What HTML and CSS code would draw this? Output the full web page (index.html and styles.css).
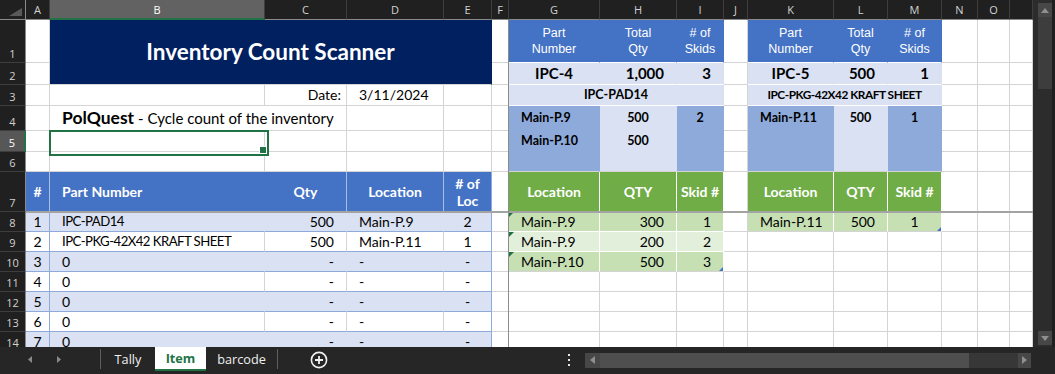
FILE: index.html
```html
<!DOCTYPE html>
<html>
<head>
<meta charset="utf-8">
<title>Inventory Count Scanner</title>
<link rel="stylesheet" href="styles.css">
</head>
<body>
<div class="app">
  <div class="sheetwrap">
    <div class="sheet">
      <!-- column headers -->
      <div class="corner"></div>
      <div class="ch">A</div><div class="ch on">B</div><div class="ch">C</div><div class="ch">D</div><div class="ch">E</div><div class="ch">F</div><div class="ch">G</div><div class="ch">H</div><div class="ch">I</div><div class="ch">J</div><div class="ch">K</div><div class="ch">L</div><div class="ch">M</div><div class="ch">N</div><div class="ch">O</div><div class="ch"></div>

      <!-- row 1 -->
      <div class="rh">1</div><div></div>
      <div class="nv">Inventory Count Scanner</div>
      <div></div>
      <div class="bh">Part<br>Number</div><div class="bh">Total<br>Qty</div><div class="bh">#&nbsp;of<br>Skids</div>
      <div></div>
      <div class="bh">Part<br>Number</div><div class="bh">Total<br>Qty</div><div class="bh">#&nbsp;of<br>Skids</div>
      <div></div><div></div><div></div>

      <!-- row 2 -->
      <div class="rh">2</div><div></div>
      <div></div>
      <div class="lb big c">IPC-4</div><div class="lb big r">1,000</div><div class="lb big r">3</div>
      <div></div>
      <div class="lb big c">IPC-5</div><div class="lb big r">500</div><div class="lb big r">1</div>
      <div></div><div></div><div></div>

      <!-- row 3 -->
      <div class="rh">3</div><div></div><div></div>
      <div class="dt">Date:</div><div class="ind">3/11/2024</div><div></div><div></div>
      <div class="lb sm c s3">IPC-PAD14</div>
      <div></div>
      <div class="lb sm c s3 capb">IPC-PKG-42X42 KRAFT SHEET</div>
      <div></div><div></div><div></div>

      <!-- row 4 -->
      <div class="rh">4</div><div></div>
      <div class="s2 ind pq"><span><b>PolQuest</b> - Cycle count of the inventory</span></div>
      <div></div><div></div><div></div>
      <div class="mb sm ind">Main-P.9</div><div class="lbm sm c">500</div><div class="mb sm c">2</div>
      <div></div>
      <div class="mb sm ind">Main-P.11</div><div class="lbm sm c">500</div><div class="mb sm c">1</div>
      <div></div><div></div><div></div>

      <!-- row 5 -->
      <div class="rh on">5</div><div></div>
      <div class="sel"></div>
      <div></div><div></div><div></div><div></div>
      <div class="mb sm ind">Main-P.10</div><div class="lbm sm c">500</div><div class="mb"></div>
      <div></div>
      <div class="mb"></div><div class="lbm"></div><div class="mb"></div>
      <div></div><div></div><div></div>

      <!-- row 6 -->
      <div class="rh">6</div><div></div><div></div><div></div><div></div><div></div><div></div>
      <div class="mb gb"></div><div class="lbm gb"></div><div class="mb gb"></div>
      <div></div>
      <div class="mb gb"></div><div class="lbm gb"></div><div class="mb gb"></div>
      <div></div><div></div><div></div>

      <!-- row 7 -->
      <div class="rh">7</div>
      <div class="lh c">#</div><div class="lh ind nr">Part Number</div><div class="lh c">Qty</div><div class="lh c">Location</div><div class="lh c two">#&nbsp;of<br>Loc</div>
      <div></div>
      <div class="gh">Location</div><div class="gh">QTY</div><div class="gh">Skid #</div>
      <div></div>
      <div class="gh">Location</div><div class="gh">QTY</div><div class="gh">Skid #</div>
      <div></div><div></div><div></div>

      <!-- row 8 -->
      <div class="rh">8</div>
      <div class="t band ta c">1</div><div class="t band ind cap">IPC-PAD14</div><div class="t band r">500</div><div class="t band ind">Main-P.9</div><div class="t band te c">2</div>
      <div></div>
      <div class="g1 ind tri">Main-P.9</div><div class="g1 r">300</div><div class="g1 r">1</div>
      <div></div>
      <div class="g1 ind last">Main-P.11</div><div class="g1 r last">500</div><div class="g1 c last hnd">1</div>
      <div></div><div></div><div></div>

      <!-- row 9 -->
      <div class="rh">9</div>
      <div class="t ta c">2</div><div class="t ind cap">IPC-PKG-42X42 KRAFT SHEET</div><div class="t r">500</div><div class="t ind">Main-P.11</div><div class="t te c">1</div>
      <div></div>
      <div class="g2 ind tri">Main-P.9</div><div class="g2 r">200</div><div class="g2 r">2</div>
      <div></div><div></div><div></div><div></div><div></div><div></div><div></div>

      <!-- row 10 -->
      <div class="rh">10</div>
      <div class="t band ta c">3</div><div class="t band ind">0</div><div class="t band r">-</div><div class="t band ind">-</div><div class="t band te c">-</div>
      <div></div>
      <div class="g1 ind tri last">Main-P.10</div><div class="g1 r last">500</div><div class="g1 r last hnd">3</div>
      <div></div><div></div><div></div><div></div><div></div><div></div><div></div>

      <!-- row 11 -->
      <div class="rh">11</div>
      <div class="t ta c">4</div><div class="t ind">0</div><div class="t r">-</div><div class="t ind">-</div><div class="t te c">-</div>
      <div></div><div></div><div></div><div></div><div></div><div></div><div></div><div></div><div></div><div></div><div></div>

      <!-- row 12 -->
      <div class="rh">12</div>
      <div class="t band ta c">5</div><div class="t band ind">0</div><div class="t band r">-</div><div class="t band ind">-</div><div class="t band te c">-</div>
      <div></div><div></div><div></div><div></div><div></div><div></div><div></div><div></div><div></div><div></div><div></div>

      <!-- row 13 -->
      <div class="rh">13</div>
      <div class="t ta c">6</div><div class="t ind">0</div><div class="t r">-</div><div class="t ind">-</div><div class="t te c">-</div>
      <div></div><div></div><div></div><div></div><div></div><div></div><div></div><div></div><div></div><div></div><div></div>

      <!-- row 14 -->
      <div class="rh">14</div>
      <div class="t band ta c">7</div><div class="t band ind">0</div><div class="t band r">-</div><div class="t band ind">-</div><div class="t band te c">-</div>
      <div></div><div></div><div></div><div></div><div></div><div></div><div></div><div></div><div></div><div></div><div></div>
    </div>
    <div class="fz-h"></div>
    <div class="fz-v"></div>
  </div>

  <div class="vscroll">
    <div class="vbtn"><svg width="8" height="5" viewBox="0 0 8 5"><polygon points="0,5 4,0 8,5" fill="#8f8f8f"/></svg></div>
    <div class="vthumb"></div>
    <div class="vtrack"></div>
    <div class="vbtn"><svg width="8" height="5" viewBox="0 0 8 5"><polygon points="0,0 8,0 4,5" fill="#8f8f8f"/></svg></div>
  </div>

  <div class="tabbar">
    <svg class="navs" width="100" height="27" viewBox="0 0 100 27">
      <polygon points="32,9 28,12.5 32,16" fill="#8a8a8a"/>
      <polygon points="57,9 61,12.5 57,16" fill="#8a8a8a"/>
    </svg>
    <div class="tsep"></div>
    <div class="tab w1">Tally</div>
    <div class="tab w2 act">Item</div>
    <div class="tab w3">barcode</div>
    <div class="tsep"></div>
    <svg class="plus" width="18" height="18" viewBox="0 0 18 18">
      <circle cx="9" cy="9" r="7.6" fill="none" stroke="#f2f2f2" stroke-width="1.6"/>
      <path d="M9 5v8M5 9h8" stroke="#f2f2f2" stroke-width="1.8"/>
    </svg>
    <div class="right">
      <svg class="dots" width="4" height="12" viewBox="0 0 4 12">
        <rect x="1" y="0" width="2" height="2" fill="#e6e6e6"/>
        <rect x="1" y="5" width="2" height="2" fill="#e6e6e6"/>
        <rect x="1" y="10" width="2" height="2" fill="#e6e6e6"/>
      </svg>
      <div class="hscroll">
        <div class="hbtn l"><svg width="5" height="8" viewBox="0 0 5 8"><polygon points="5,0 0,4 5,8" fill="#8f8f8f"/></svg></div>
        <div class="hthumb"></div>
        <div class="htrack"></div>
        <div class="hbtn r"><svg width="5" height="8" viewBox="0 0 5 8"><polygon points="0,0 5,4 0,8" fill="#8f8f8f"/></svg></div>
      </div>
    </div>
  </div>
</div>
</body>
</html>
```

FILE: styles.css
```css
* { box-sizing: border-box; margin: 0; padding: 0; }
html, body { width: 1055px; height: 374px; overflow: hidden; background: #262626; }

.app {
  display: grid;
  grid-template-columns: 1033px 22px;
  grid-template-rows: 347px 27px;
  width: 1055px;
  height: 374px;
}

/* ---------- sheet ---------- */
.sheetwrap { position: relative; overflow: hidden; background: #fff; }

.sheet {
  display: grid;
  grid-template-columns: 26px 24px 215px 82px 97px 48px 17px 91px 77px 47px 24px 86px 54px 54px 36px 32px 23px;
  grid-template-rows: 20px 43px 22px 21px 25px 21px 20px 40px repeat(7, 20px);
  font-family: Lato, "Liberation Sans", sans-serif;
  font-size: 14px;
  color: #000;
}

.sheet > div {
  position: relative;
  display: flex;
  align-items: center;
  white-space: nowrap;
  line-height: 1;
  padding: 0 3px;
  background: #fff;
  border-right: 1px solid #d4d4d4;
  border-bottom: 1px solid #d4d4d4;
}

/* headers */
.sheet > .corner { background: #202020; border-right-color: #8a8a8a; border-bottom-color: #8a8a8a; }
.sheet > .corner::after {
  content: ""; position: absolute; right: 3px; bottom: 3px;
  border-style: solid; border-width: 0 0 8px 13px;
  border-color: transparent transparent #595959 transparent;
}
.sheet > .ch {
  background: #202020; color: #d2d2d2;
  border-right-color: #3e3e3e; border-bottom-color: #8a8a8a;
  justify-content: center;
  font-family: "Open Sans", sans-serif; font-size: 11px;
}
.sheet > .ch.on { background: #626262; color: #fff; border-bottom: 2px solid #217346; }
.sheet > .rh {
  background: #202020; color: #d2d2d2;
  border-right-color: #8a8a8a; border-bottom-color: #3e3e3e;
  justify-content: center; align-items: flex-end; padding-bottom: 3px;
  font-family: "Open Sans", sans-serif; font-size: 11px;
}
.sheet > .rh.on { background: #575757; color: #fff; border-right: 2px solid #217346; }

/* alignment */
.sheet > .c { justify-content: center; text-align: center; }
.sheet > .r { justify-content: flex-end; padding-right: 12px; }
.sheet > .ind { padding-left: 12px; }
.sheet > .dt { justify-content: flex-end; padding-right: 5px; }
.sheet > .s2 { grid-column: span 2; }
.sheet > .s3 { grid-column: span 3; }
.sheet > .cap { font-size: 13.2px; letter-spacing: -0.55px; }

/* title */
.sheet > .nv {
  grid-column: span 4; grid-row: span 2;
  background: #002060; color: #fff;
  font-weight: 700; font-size: 22.5px;
  justify-content: center;
  border-right-color: transparent;
}
.sheet > .pq { font-size: 15px; }
.pq b { font-size: 17.5px; }

/* selection */
.sheet > .sel { z-index: 2; }
.sel::before {
  content: ""; position: absolute; left: -1px; top: -1px;
  width: 216px; height: 22px;
  border: 2px solid #217346;
}
.sel::after {
  content: ""; position: absolute; right: -3px; bottom: -3px;
  width: 6px; height: 6px; background: #217346; border: 1px solid #fff;
}

/* summary tables top right */
.sheet > .bh {
  background: #4472c4; color: #fff;
  font-family: "Liberation Sans", Arial, sans-serif; font-size: 12.5px; line-height: 16px;
  justify-content: center; text-align: center;
  border-right-color: transparent; border-bottom-color: #fff;
}
.sheet > .lb { background: #d9e1f2; border-right-color: transparent; border-bottom-color: #fff; }
.sheet > .lbm { background: #d9e1f2; border-right-color: transparent; border-bottom-color: transparent; }
.sheet > .mb { background: #8eaadb; border-right-color: transparent; border-bottom-color: transparent; }
.sheet > .gb { border-bottom-color: #d4d4d4; }
.sheet > .big { font-weight: 700; font-size: 15px; }
.sheet > .sm { font-weight: 700; font-size: 12.5px; }
.sheet > .capb { font-size: 11.8px; letter-spacing: -0.45px; }

/* left table */
.sheet > .lh { background: #4472c4; color: #fff; font-weight: 700; border-right-color: #a9bde3; }
.sheet > .nr { border-right-color: transparent; }
.sheet > .two { line-height: 17px; border-right-color: #8eaadb; }
.sheet > .t { border-bottom-color: #8eaadb; }
.sheet > .band { background: #d9e1f2; border-right-color: transparent; }
.sheet > .ta, .sheet > .te { border-right-color: #8eaadb; }

/* green tables */
.sheet > .gh {
  background: #70ad47; color: #fff; font-weight: 700;
  justify-content: center; border-right-color: #fff;
}
.sheet > .g1 { background: #c6e0b4; border-right-color: #fff; border-bottom-color: #fff; }
.sheet > .g2 { background: #e2efda; border-right-color: #fff; border-bottom-color: #fff; }
.sheet > .last { border-bottom-color: #d4d4d4; }

.tri::before {
  content: ""; position: absolute; left: 0; top: 0;
  border-style: solid; border-width: 5px 5px 0 0;
  border-color: #1e7145 transparent transparent transparent;
}
.hnd::after {
  content: ""; position: absolute; right: 0; bottom: 0;
  border-style: solid; border-width: 0 0 4px 4px;
  border-color: transparent transparent #4472c4 transparent;
}

/* freeze panes */
.fz-h { position: absolute; left: 26px; right: 0; top: 211px; height: 2px; background: #a3a3a3; }
.fz-v { position: absolute; left: 508px; top: 20px; bottom: 0; width: 1px; background: #8c8c8c; }

/* ---------- vertical scrollbar ---------- */
.vscroll {
  background: #2c2c2c;
  border-right: 3px solid #1f1f1f;
  display: flex; flex-direction: column;
  padding: 3px 0 2px 5px;
}
.vbtn { height: 14px; background: #474747; display: flex; align-items: center; justify-content: center; }
.vthumb { height: 72px; background: #3d3d3d; }
.vtrack { flex: 1; }

/* ---------- tab bar ---------- */
.tabbar {
  grid-column: 1 / span 2;
  background: #262626;
  display: flex; align-items: flex-start;
  font-family: "Open Sans", sans-serif; font-size: 12.7px; color: #f0f0f0;
}
.navs { flex: none; }
.tsep { width: 1px; height: 20px; margin-top: 2px; background: #5e5e5e; flex: none; }
.tab { height: 24px; display: flex; align-items: center; justify-content: center; flex: none; padding-bottom: 1px; }
.w1 { width: 54px; }
.w2 { width: 51px; }
.w3 { width: 71px; }
.tab.act { background: #fff; color: #217346; font-weight: 700; border-bottom: 2px solid #217346; }
.plus { margin: 4px 0 0 32px; flex: none; }

.right { margin-left: auto; margin-right: 24px; display: flex; align-items: center; height: 27px; padding-bottom: 1px; }
.dots { margin-right: 14px; }
.hscroll { width: 446px; height: 15px; display: flex; }
.hbtn { display: flex; align-items: center; justify-content: center; background: #474747; }
.hbtn.l { width: 15px; }
.hbtn.r { width: 13px; }
.hthumb { width: 369px; background: #4f4f4f; }
.htrack { flex: 1; background: #373737; }
```
